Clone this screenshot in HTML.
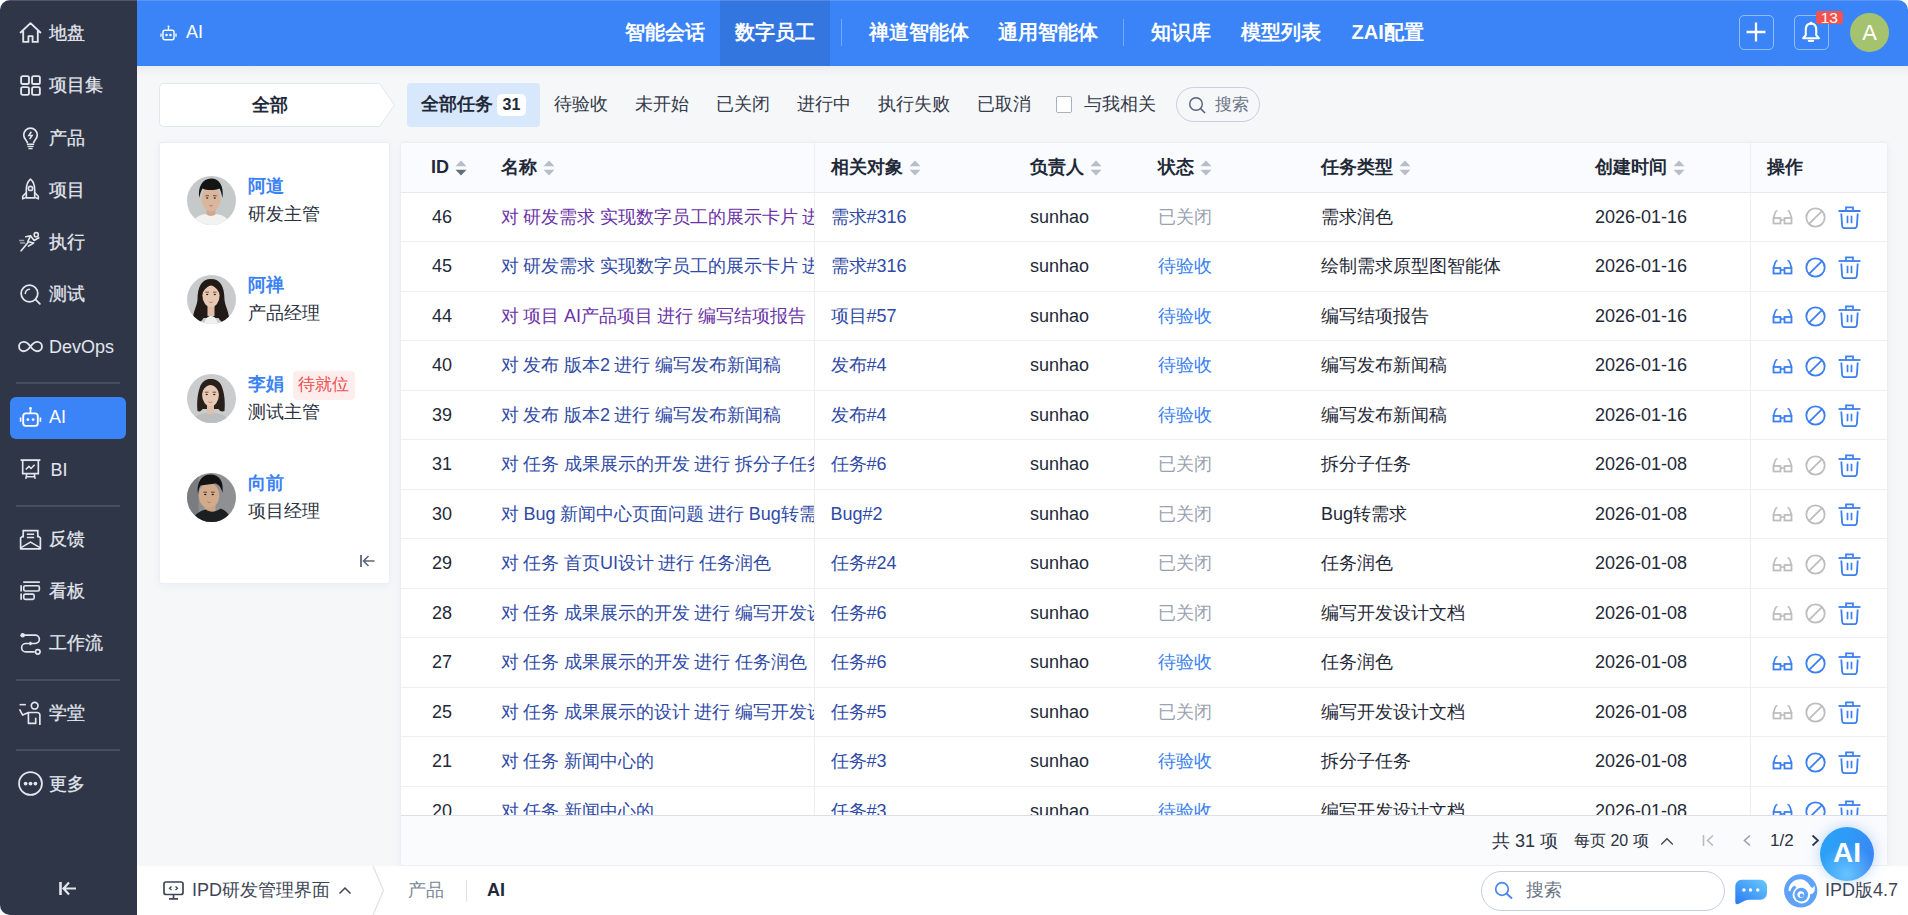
<!DOCTYPE html>
<html><head><meta charset="utf-8">
<style>
*{box-sizing:border-box;margin:0;padding:0}
html,body{width:1908px;height:915px;overflow:hidden;background:#fff}
body{font-family:"Liberation Sans",sans-serif;font-size:18px;color:#1f2937;position:relative}
.app{position:absolute;left:0;top:0;width:1908px;height:915px;border-radius:10px;overflow:hidden;background:#f6f7f9}
.topline{position:absolute;left:0;top:0;width:1908px;height:1px;background:rgba(255,255,255,.16)}
.hshadow{position:absolute;left:137px;top:66px;width:1771px;height:10px;background:linear-gradient(rgba(30,40,60,.05),rgba(30,40,60,0))}
.abs{position:absolute}
.nw{white-space:nowrap}
/* sidebar */
.side{position:absolute;left:0;top:0;width:137px;height:915px;background:#2f3648}
.si{position:absolute;left:0;width:137px;height:40px;color:#e3e6ec;font-weight:500}
.si span.cj{-webkit-text-stroke:0.25px #e3e6ec}
.si svg{position:absolute;left:18px;top:7.5px;width:25px;height:25px}
.si span{position:absolute;left:49px;top:0;line-height:40px;white-space:nowrap}
.sdiv{position:absolute;left:16px;width:104px;height:2px;background:#464e60}
.si.act{left:10px;width:116px;height:42px;background:#3a84f8;border-radius:6px}
.si.act svg{left:8px;top:8px}
.si.act span{left:39px;color:#fff;line-height:41px}
/* header */
.hdr{position:absolute;left:137px;top:0;width:1771px;height:66px;background:#3a84f8}
.nav{position:absolute;top:0;height:66px;line-height:64px;color:#fff;font-size:20px;font-weight:700;padding:0 15px;white-space:nowrap}
.navact{background:#3476e0}
.vdiv{position:absolute;top:19px;width:1px;height:27px;background:rgba(255,255,255,.3)}
.hbtn{position:absolute;top:15px;width:35px;height:35px;border:1.5px solid rgba(255,255,255,.45);border-radius:5px}
/* filter */
.tab{position:absolute;top:83px;height:43.5px;line-height:43.5px;padding:0 13.5px;white-space:nowrap;color:#333a48}
.tab.act{background:#d7e7fc;border-radius:4px;font-weight:700;color:#1f2937}
.badge{display:inline-block;vertical-align:top;margin-top:11px;margin-left:4px;height:22px;line-height:22px;padding:0 6px;background:#fff;border-radius:5px;font-size:16px;font-weight:700}
/* left panel */
.panel{position:absolute;left:159px;top:142px;width:231px;height:442px;background:#fff;border:1px solid #eceef3;border-radius:3px;box-shadow:0 2px 8px rgba(30,40,70,.05)}
.pname{position:absolute;left:88px;font-weight:700;color:#3b82f6;white-space:nowrap}
.prole{position:absolute;left:88px;color:#2b3240;white-space:nowrap}
.av{position:absolute;left:27px;width:49px;height:49px;border-radius:50%;overflow:hidden}
/* table */
.card{position:absolute;left:400px;top:142px;width:1488px;height:724px;background:#fff;border:1px solid #eceef3;border-radius:3px;overflow:hidden;box-shadow:0 2px 8px rgba(30,40,70,.05)}
.thead{position:absolute;left:0;top:0;width:1486px;height:50px;background:#f9fbfe;border-bottom:1px solid #e6e9f0}
.th{position:absolute;top:0;line-height:48px;font-weight:700;color:#1f2937;white-space:nowrap}
.sort{display:inline-block;vertical-align:top;margin-top:17px;margin-left:6px;width:12px;height:16px}
.tbody{position:absolute;left:0;top:49.5px;width:1486px;height:623px;overflow:hidden;border-bottom:1px solid #dcdfe6}
.row{position:absolute;left:0;width:1486px;height:49.5px;border-bottom:1px solid #edeff3}
.td{position:absolute;top:0;line-height:48.5px;white-space:nowrap;color:#1f2937}
.lk{color:#2f4aa6}
.nm{word-spacing:-0.55px}
.vis{color:#6a32a8}
.gray{color:#9aa1b0}
.blue{color:#3b7ff0}
.vline{position:absolute;top:0;width:1px;background:#edeff3}
.tfoot{position:absolute;left:0;top:673px;width:1486px;height:50px;background:#fafbfd}
/* bottom */
.bbar{position:absolute;left:137px;top:866px;width:1771px;height:49px;background:#fff}
</style></head>
<body>
<div class="app">

<div class="side">
<div class="si" style="top:12.5px"><svg viewBox="0 0 24 24"><path d="M2 12.5 L12 3 L22 12.5 M5 10.5 V21 H10 V15.5 H14 V21 H19 V10.5" fill="none" stroke="#e3e6ec" stroke-width="1.8" stroke-linejoin="round"/></svg><span class="cj">地盘</span></div>
<div class="si" style="top:65px"><svg viewBox="0 0 24 24"><rect x="3" y="3" width="7.5" height="7.5" rx="1.5" fill="none" stroke="#e3e6ec" stroke-width="1.8"/><rect x="13.5" y="3" width="7.5" height="7.5" rx="1.5" fill="none" stroke="#e3e6ec" stroke-width="1.8"/><rect x="3" y="13.5" width="7.5" height="7.5" rx="1.5" fill="none" stroke="#e3e6ec" stroke-width="1.8"/><rect x="13.5" y="13.5" width="7.5" height="7.5" rx="1.5" fill="none" stroke="#e3e6ec" stroke-width="1.8"/></svg><span class="cj">项目集</span></div>
<div class="si" style="top:117.5px"><svg viewBox="0 0 24 24"><path d="M9 17.5 C9 15 5.5 13.5 5.5 9.5 A6.5 6.5 0 0 1 18.5 9.5 C18.5 13.5 15 15 15 17.5" fill="none" stroke="#e3e6ec" stroke-width="1.6"/><path d="M8.5 18.5 H15.5 M9 20.5 H15 M10 22.5 H14" stroke="#e3e6ec" stroke-width="1.4"/><path d="M12.8 6.5 L10.5 10 H13.5 L11.2 13.5" fill="none" stroke="#e3e6ec" stroke-width="1.5"/></svg><span class="cj">产品</span></div>
<div class="si" style="top:169.5px"><svg viewBox="0 0 24 24"><path d="M12 2 C15.5 5 16 9 16 12 V20 H8 V12 C8 9 8.5 5 12 2 Z" fill="none" stroke="#e3e6ec" stroke-width="1.6" stroke-linejoin="round"/><circle cx="12" cy="11" r="2" fill="none" stroke="#e3e6ec" stroke-width="1.5"/><path d="M8 15 L4.5 18.5 V21 L8 19.5 M16 15 L19.5 18.5 V21 L16 19.5" fill="none" stroke="#e3e6ec" stroke-width="1.5" stroke-linejoin="round"/></svg><span class="cj">项目</span></div>
<div class="si" style="top:222px"><svg viewBox="0 0 24 24"><circle cx="17.5" cy="4.5" r="2" fill="none" stroke="#e3e6ec" stroke-width="1.5"/><path d="M7.5 6.5 L12 5.5 L9.5 11 L15 12.5 L10 15.5 M12 5.5 L15.5 10 L20 7.5 M10 11.5 L3 20" fill="none" stroke="#e3e6ec" stroke-width="1.6" stroke-linecap="round" stroke-linejoin="round"/><path d="M1 10 H6 M2 12.5 H7" stroke="#9aa0ab" stroke-width="1.5"/></svg><span class="cj">执行</span></div>
<div class="si" style="top:274px"><svg viewBox="0 0 24 24"><circle cx="11" cy="11" r="8" fill="none" stroke="#e3e6ec" stroke-width="1.7"/><path d="M17 17 L21 21" stroke="#e3e6ec" stroke-width="1.7" stroke-linecap="round"/><path d="M7 11 A4.5 4.5 0 0 1 11 7" fill="none" stroke="#e3e6ec" stroke-width="1.5" stroke-linecap="round"/></svg><span class="cj">测试</span></div>
<div class="si" style="top:326.5px"><svg viewBox="0 0 24 24"><path d="M12 12 C9.5 8.5 7.5 7.5 5.5 7.5 A4.5 4.5 0 0 0 5.5 16.5 C7.5 16.5 9.5 15.5 12 12 C14.5 8.5 16.5 7.5 18.5 7.5 A4.5 4.5 0 0 1 18.5 16.5 C16.5 16.5 14.5 15.5 12 12 Z" fill="none" stroke="#e3e6ec" stroke-width="1.8"/></svg><span>DevOps</span></div>
<div class="si act" style="top:397px"><svg viewBox="0 0 24 24"><rect x="5" y="8" width="14" height="12" rx="2.5" fill="none" stroke="#ffffff" stroke-width="1.8"/><path d="M12 8 V4" stroke="#ffffff" stroke-width="1.6"/><circle cx="12" cy="3.2" r="1.3" fill="#ffffff"/><circle cx="9.5" cy="14" r="1.3" fill="#ffffff"/><circle cx="14.5" cy="14" r="1.3" fill="#ffffff"/><path d="M2.5 12 V16 M21.5 12 V16" stroke="#ffffff" stroke-width="1.6"/></svg><span>AI</span></div>
<div class="si" style="top:449.5px"><svg viewBox="0 0 24 24"><path d="M2.5 3 H21.5" stroke="#e3e6ec" stroke-width="1.8"/><path d="M4.5 3 V16 H19.5 V3" fill="none" stroke="#e3e6ec" stroke-width="1.6"/><path d="M7.5 12 L10.5 9 L12.5 11 L16 7.5" fill="none" stroke="#e3e6ec" stroke-width="1.5"/><path d="M8.5 16 L7.5 21 M15.5 16 L16.5 21 M8 19 H16" stroke="#e3e6ec" stroke-width="1.5"/></svg><span style="left:50.5px">BI</span></div>
<div class="si" style="top:519px"><svg viewBox="0 0 24 24"><path d="M5 10 V3.5 H19 V10" fill="none" stroke="#e3e6ec" stroke-width="1.6"/><path d="M8.5 7 H15.5 M8.5 10 H15.5" stroke="#e3e6ec" stroke-width="1.5"/><path d="M5 8.5 L2.5 10.5 V21 H21.5 V10.5 L19 8.5" fill="none" stroke="#e3e6ec" stroke-width="1.6" stroke-linejoin="round"/><path d="M2.5 20 L12 14.5 L21.5 20" fill="none" stroke="#e3e6ec" stroke-width="1.5"/></svg><span class="cj">反馈</span></div>
<div class="si" style="top:571px"><svg viewBox="0 0 24 24"><path d="M5 3 H21" stroke="#e3e6ec" stroke-width="1.6"/><path d="M3 6 V12 M3 14 V20" stroke="#e3e6ec" stroke-width="1.6"/><rect x="5.5" y="6.5" width="15" height="5" rx="1.5" fill="none" stroke="#e3e6ec" stroke-width="1.6"/><rect x="5.5" y="14.5" width="10" height="5" rx="1.5" fill="none" stroke="#e3e6ec" stroke-width="1.6"/></svg><span class="cj">看板</span></div>
<div class="si" style="top:623px"><svg viewBox="0 0 24 24"><circle cx="4.5" cy="4" r="2.2" fill="#e3e6ec"/><path d="M6 4 H16.5 A4 4 0 0 1 16.5 12 H7.5 A4 4 0 0 0 7.5 20 H16" fill="none" stroke="#e3e6ec" stroke-width="1.6"/><circle cx="19" cy="20" r="2.2" fill="none" stroke="#e3e6ec" stroke-width="1.6"/><path d="M12 10 L14 12 L12 14 L10 12 Z" fill="#e3e6ec"/></svg><span class="cj">工作流</span></div>
<div class="si" style="top:693px"><svg viewBox="0 0 24 24"><path d="M1.5 3.5 H7.5" stroke="#e3e6ec" stroke-width="1.5"/><circle cx="16" cy="4.5" r="3.2" fill="none" stroke="#e3e6ec" stroke-width="1.6"/><path d="M1.5 8 L4.5 13.5 L10 11 H18.5 A2.5 2.5 0 0 1 21 13.5 V23 M10 11 V21.5 H17 V16" fill="none" stroke="#e3e6ec" stroke-width="1.6" stroke-linejoin="round"/></svg><span class="cj">学堂</span></div>
<div class="si" style="top:763.5px"><svg viewBox="0 0 24 24"><circle cx="12" cy="12" r="11" fill="none" stroke="#e3e6ec" stroke-width="1.7"/><circle cx="7.3" cy="12" r="1.8" fill="#e3e6ec"/><circle cx="12" cy="12" r="1.8" fill="#e3e6ec"/><circle cx="16.7" cy="12" r="1.8" fill="#e3e6ec"/></svg><span class="cj">更多</span></div>
<div class="sdiv" style="top:382px"></div>
<div class="sdiv" style="top:505px"></div>
<div class="sdiv" style="top:679px"></div>
<div class="sdiv" style="top:749px"></div>
<svg class="abs" style="left:58px;top:880px;width:20px;height:17px" viewBox="0 0 20 17"><path d="M2.5 2 V15" stroke="#e3e6ec" stroke-width="2.6"/><path d="M11 2.5 L5.5 8.5 L11 14.5 M5.5 8.5 H18" fill="none" stroke="#e3e6ec" stroke-width="2.2"/></svg>
</div>
<div class="hdr">
<svg class="abs" style="left:22px;top:23.5px;width:19px;height:19px" viewBox="0 0 24 24"><rect x="5" y="8" width="14" height="12" rx="2.5" fill="none" stroke="#fff" stroke-width="1.8"/><path d="M12 8 V4" stroke="#fff" stroke-width="1.6"/><circle cx="12" cy="3.2" r="1.3" fill="#fff"/><circle cx="9.5" cy="14" r="1.6" fill="#fff"/><circle cx="14.5" cy="14" r="1.6" fill="#fff"/><path d="M2.5 12 V16 M21.5 12 V16" stroke="#fff" stroke-width="1.6"/></svg>
<div class="abs nw" style="left:49px;top:0;line-height:64px;color:#fff;font-size:18px">AI</div>
<div class="nav" style="left:473px">智能会话</div>
<div class="nav navact" style="left:583px">数字员工</div>
<div class="nav" style="left:716.5px">禅道智能体</div>
<div class="nav" style="left:845.5px">通用智能体</div>
<div class="nav" style="left:998.5px">知识库</div>
<div class="nav" style="left:1089px">模型列表</div>
<div class="nav" style="left:1199.5px">ZAI配置</div>
<div class="vdiv" style="left:704px"></div>
<div class="vdiv" style="left:986px"></div>
<div class="hbtn" style="left:1602px"><svg class="abs" style="left:6px;top:6px;width:20px;height:20px" viewBox="0 0 20 20"><path d="M10 0.5 V19.5 M0.5 10 H19.5" stroke="#fff" stroke-width="2.3"/></svg></div>
<div class="hbtn" style="left:1657px"><svg class="abs" style="left:6px;top:5px;width:20px;height:23px" viewBox="0 0 19 22"><path d="M9.5 2.5 C6 2.5 4.5 5 4.5 8.5 V13.5 L2 16.5 H17 L14.5 13.5 V8.5 C14.5 5 13 2.5 9.5 2.5 Z" fill="none" stroke="#fff" stroke-width="2" stroke-linejoin="round"/><circle cx="9.5" cy="2" r="1.3" fill="#fff"/><path d="M7.5 19 H11.5" stroke="#fff" stroke-width="2.2" stroke-linecap="round"/></svg></div>
<div class="abs nw" style="left:1679px;top:10.5px;width:26.5px;height:13.5px;background:#f25350;border-radius:3px;color:#fff;font-size:15.5px;line-height:14px;text-align:center">13</div>
<div class="abs" style="left:1713px;top:13px;width:39px;height:39px;border-radius:50%;background:#a5c26f;color:#fff;font-size:22px;line-height:40px;text-align:center">A</div>
</div>
<svg class="abs" style="left:158px;top:82px;width:240px;height:47px" viewBox="0 0 240 47"><path d="M5.5 1.5 H221.5 L236.5 23 L221.5 44.5 H5.5 A4 4 0 0 1 1.5 40.5 V5.5 A4 4 0 0 1 5.5 1.5 Z" fill="#fff" stroke="#e3e6ee" stroke-width="1"/></svg>
<div class="abs nw" style="left:159px;top:83px;width:221px;line-height:44px;text-align:center;font-weight:700;color:#1f2937">全部</div>
<div class="tab act" style="left:407px">全部任务<span class="badge">31</span></div>
<div class="tab" style="left:540px">待验收</div>
<div class="tab" style="left:621px">未开始</div>
<div class="tab" style="left:702px">已关闭</div>
<div class="tab" style="left:783px">进行中</div>
<div class="tab" style="left:864px">执行失败</div>
<div class="tab" style="left:963px">已取消</div>
<div class="abs" style="left:1056px;top:96px;width:16px;height:17px;border:1.5px solid #a9b0be;border-radius:2px;background:#fff"></div>
<div class="abs nw" style="left:1083.5px;top:83px;line-height:43px;color:#333a48">与我相关</div>
<div class="abs" style="left:1176px;top:87px;width:84px;height:35px;border:1.2px solid #c9cee0;border-radius:18px"></div>
<svg class="abs" style="left:1188px;top:95.5px;width:19px;height:19px" viewBox="0 0 19 19"><circle cx="8" cy="8" r="6.3" fill="none" stroke="#566074" stroke-width="1.4"/><path d="M12.5 12.5 L17 17" stroke="#566074" stroke-width="1.6"/></svg>
<div class="abs nw" style="left:1215px;top:87px;line-height:35px;font-size:17px;color:#6d7587">搜索</div>
<div class="panel">
<div class="av" style="top:33px"><svg viewBox="2.5 3 49 49" width="49" height="49"><rect x="0" y="0" width="55" height="55" fill="#c6c9ca"/><rect x="22" y="34" width="9" height="9" fill="#cfa98f"/><path d="M5 55 C7 46 14 42 21.5 41 C24 43.5 29 43.5 31.5 41 C39 42 46 46 48 55 Z" fill="#f2f2f2"/><ellipse cx="26.5" cy="26" rx="9.6" ry="12.4" fill="#d9b69c"/><path d="M14.8 25 C13 14 18 5.5 26.5 5.5 C35 5.5 39.5 13 38 25 C37 21 36.5 18 35 15.5 C30 17.5 22 17.5 18 15.5 C16.5 18 15.5 21 14.8 25 Z" fill="#151515"/><path d="M20.9 22.7 H24.5 M28.5 22.7 H32.1" stroke="#3a2a22" stroke-width="0.9" opacity=".8"/><ellipse cx="22.7" cy="25" rx="1.2" ry="0.7" fill="#3a2a22"/><ellipse cx="30.3" cy="25" rx="1.2" ry="0.7" fill="#3a2a22"/><path d="M24.7 32.5 Q26.5 33.5 28.3 32.5" stroke="#b07a6a" stroke-width="0.9" fill="none"/></svg></div>
<div class="pname" style="top:33px;line-height:20px">阿道</div>
<div class="prole" style="top:60px;line-height:22px">研发主管</div>
<div class="av" style="top:132px"><svg viewBox="2.5 3 49 49" width="49" height="49"><rect x="0" y="0" width="55" height="55" fill="#c9cacb"/><path d="M9 50 C7 42 12 36 13 28 C13 14 17.5 7 26.5 7 C35.5 7 40 14 40 28 C41 36 46 42 44 50 C40 52 36 50 34 46 L19 46 C17 50 13 52 9 50 Z" fill="#221a17"/><path d="M19 55 C20 47 23 44 26.5 44 C30 44 33 47 34 55 Z" fill="#f0f0f0"/><rect x="23" y="33" width="7" height="11" fill="#dfbda7"/><ellipse cx="26.5" cy="23.5" rx="8.6" ry="11.5" fill="#e8c8b2"/><path d="M17.8 22 C18 14 21.5 11 26.5 11 C31.5 11 35 14 35.2 22 C33 16.5 29.5 14 26.5 13.5 C23.5 14 20 16.5 17.8 22 Z" fill="#221a17"/><path d="M20.9 20.2 H24.5 M28.5 20.2 H32.1" stroke="#3a2a22" stroke-width="0.9" opacity=".8"/><ellipse cx="22.7" cy="22.5" rx="1.2" ry="0.7" fill="#3a2a22"/><ellipse cx="30.3" cy="22.5" rx="1.2" ry="0.7" fill="#3a2a22"/><path d="M24.7 30.0 Q26.5 31.0 28.3 30.0" stroke="#b07a6a" stroke-width="0.9" fill="none"/></svg></div>
<div class="pname" style="top:132px;line-height:20px">阿禅</div>
<div class="prole" style="top:159px;line-height:22px">产品经理</div>
<div class="av" style="top:231px"><svg viewBox="2.5 3 49 49" width="49" height="49"><rect x="0" y="0" width="55" height="55" fill="#cbcccd"/><path d="M5 55 C7 46 15 41.5 26 41.5 C37 41.5 45 46 47 55 Z" fill="#bcbdbf"/><path d="M13 40 C12 30 13.5 22 15 17.5 C17 10.5 21 8 26 8 C32 8 36 10.5 38 17.5 C39.5 22 41 30 40 40 C37 41 35 40 34 38 L18 38 C17 40 15 41 13 40 Z" fill="#2a201b"/><rect x="22.5" y="33" width="7" height="10" fill="#dec0ac"/><ellipse cx="26" cy="24" rx="8.4" ry="11.3" fill="#e7c9b5"/><path d="M17.4 22.5 C17.5 15 21 12 26 12 C31 12 34.5 15 34.6 22.5 C33 17 30 14.5 26 14 C22 14.5 19 17 17.4 22.5 Z" fill="#2a201b"/><path d="M20.4 21.2 H24.0 M28.0 21.2 H31.6" stroke="#3a2a22" stroke-width="0.9" opacity=".8"/><ellipse cx="22.2" cy="23.5" rx="1.2" ry="0.7" fill="#3a2a22"/><ellipse cx="29.8" cy="23.5" rx="1.2" ry="0.7" fill="#3a2a22"/><path d="M24.2 31.0 Q26 32.0 27.8 31.0" stroke="#b07a6a" stroke-width="0.9" fill="none"/></svg></div>
<div class="pname" style="top:231px;line-height:20px">李娟</div>
<div class="prole" style="top:258px;line-height:22px">测试主管</div>
<div class="av" style="top:330px"><svg viewBox="2.5 3 49 49" width="49" height="49"><rect x="0" y="0" width="55" height="55" fill="#8e9093"/><rect x="0" y="0" width="14" height="55" fill="#6d6f72" opacity=".6"/><rect x="20" y="34" width="11" height="9" fill="#cba486"/><path d="M5 55 C8 46 15 40.5 21.5 39.5 C25 42.5 31 42.5 36 38.5 C42 40.5 46 45 48 55 Z" fill="#1c1e20"/><ellipse cx="24.5" cy="25.5" rx="10.2" ry="12.8" fill="#d2ab8d"/><path d="M13.5 24 C11.5 12 17.5 4.5 26 4.5 C34.5 4.5 39.5 11 38 23 C36.5 17.5 34.5 14.5 31 13.5 C27 14.5 20 14.5 16 15.5 C14.5 18 14 21 13.5 24 Z" fill="#131313"/><path d="M18.9 22.2 H22.5 M26.5 22.2 H30.1" stroke="#2a1d15" stroke-width="0.9" opacity=".8"/><ellipse cx="20.7" cy="24.5" rx="1.2" ry="0.7" fill="#2a1d15"/><ellipse cx="28.3" cy="24.5" rx="1.2" ry="0.7" fill="#2a1d15"/><path d="M22.7 32.0 Q24.5 33.0 26.3 32.0" stroke="#b07a6a" stroke-width="0.9" fill="none"/></svg></div>
<div class="pname" style="top:330px;line-height:20px">向前</div>
<div class="prole" style="top:357px;line-height:22px">项目经理</div>
<div class="abs nw" style="left:133px;top:228px;width:61.5px;height:29px;background:#fdeded;border-radius:4px;color:#f04d4d;line-height:27px;text-align:center;font-size:17px">待就位</div>
<svg class="abs" style="left:199px;top:410px;width:17px;height:16px" viewBox="0 0 17 16"><path d="M2 2 V14" stroke="#5d6678" stroke-width="1.8"/><path d="M9.5 3 L4.5 8 L9.5 13 M4.5 8 H15.5" fill="none" stroke="#5d6678" stroke-width="1.6"/></svg>
</div>
<div class="card">
<div class="thead">
<div class="th" style="left:30px">ID<svg class="sort" viewBox="0 0 12 16"><path d="M0.5 6.3 L6 0.5 L11.5 6.3 Z" fill="#b8bdc7"/><path d="M0.5 9.7 L6 15.5 L11.5 9.7 Z" fill="#676d7b"/></svg></div>
<div class="th" style="left:100px">名称<svg class="sort" viewBox="0 0 12 16"><path d="M0.5 6.3 L6 0.5 L11.5 6.3 Z" fill="#b8bdc7"/><path d="M0.5 9.7 L6 15.5 L11.5 9.7 Z" fill="#b8bdc7"/></svg></div>
<div class="th" style="left:429.5px">相关对象<svg class="sort" viewBox="0 0 12 16"><path d="M0.5 6.3 L6 0.5 L11.5 6.3 Z" fill="#b8bdc7"/><path d="M0.5 9.7 L6 15.5 L11.5 9.7 Z" fill="#b8bdc7"/></svg></div>
<div class="th" style="left:629px">负责人<svg class="sort" viewBox="0 0 12 16"><path d="M0.5 6.3 L6 0.5 L11.5 6.3 Z" fill="#b8bdc7"/><path d="M0.5 9.7 L6 15.5 L11.5 9.7 Z" fill="#b8bdc7"/></svg></div>
<div class="th" style="left:757px">状态<svg class="sort" viewBox="0 0 12 16"><path d="M0.5 6.3 L6 0.5 L11.5 6.3 Z" fill="#b8bdc7"/><path d="M0.5 9.7 L6 15.5 L11.5 9.7 Z" fill="#b8bdc7"/></svg></div>
<div class="th" style="left:920px">任务类型<svg class="sort" viewBox="0 0 12 16"><path d="M0.5 6.3 L6 0.5 L11.5 6.3 Z" fill="#b8bdc7"/><path d="M0.5 9.7 L6 15.5 L11.5 9.7 Z" fill="#b8bdc7"/></svg></div>
<div class="th" style="left:1194px">创建时间<svg class="sort" viewBox="0 0 12 16"><path d="M0.5 6.3 L6 0.5 L11.5 6.3 Z" fill="#b8bdc7"/><path d="M0.5 9.7 L6 15.5 L11.5 9.7 Z" fill="#b8bdc7"/></svg></div>
<div class="th" style="left:1366px">操作</div>
</div>
<div class="tbody">
<div class="row" style="top:0.0px">
<div class="td" style="left:31px">46</div>
<div class="td nm vis" style="left:100px;width:313px;overflow:hidden">对 研发需求 实现数字员工的展示卡片 进行 需求润色</div>
<div class="td lk" style="left:429.5px">需求#316</div>
<div class="td" style="left:629px">sunhao</div>
<div class="td gray" style="left:757px">已关闭</div>
<div class="td" style="left:920px">需求润色</div>
<div class="td" style="left:1194px">2026-01-16</div>
<svg class="abs" style="left:1371px;top:16.5px;width:21px;height:16px" viewBox="0 0 21 16"><path d="M5.5 1.5 C4 1.5 3.5 2.5 3 4 L1.5 9 M15.5 1.5 C17 1.5 17.5 2.5 18 4 L19.5 9" fill="none" stroke="#bdbdbd" stroke-width="1.7"/><rect x="1.5" y="9" width="7" height="5.5" fill="none" stroke="#bdbdbd" stroke-width="1.8"/><rect x="12.5" y="9" width="7" height="5.5" fill="none" stroke="#bdbdbd" stroke-width="1.8"/><path d="M8.5 11 H12.5" stroke="#bdbdbd" stroke-width="1.6"/></svg><svg class="abs" style="left:1404px;top:14.5px;width:21px;height:21px" viewBox="0 0 21 21"><circle cx="10.5" cy="10.5" r="9.2" fill="none" stroke="#bdbdbd" stroke-width="1.8"/><path d="M4.3 16.7 L16.7 4.3" stroke="#bdbdbd" stroke-width="1.8"/></svg><svg class="abs" style="left:1437px;top:13.5px;width:23px;height:23px" viewBox="0 0 23 23"><path d="M0.5 5 H22.5" stroke="#3b7ff0" stroke-width="1.8"/><path d="M8 5 V1.3 H15 V5" fill="none" stroke="#3b7ff0" stroke-width="1.7"/><path d="M3.3 7.5 L4.1 19.8 A2.6 2.6 0 0 0 6.7 22.2 H16.3 A2.6 2.6 0 0 0 18.9 19.8 L19.7 7.5" fill="none" stroke="#3b7ff0" stroke-width="1.8"/><path d="M9.5 9.7 V17.3 M13.5 9.7 V17.3" stroke="#3b7ff0" stroke-width="1.7"/></svg>
</div>
<div class="row" style="top:49.5px">
<div class="td" style="left:31px">45</div>
<div class="td nm lk" style="left:100px;width:313px;overflow:hidden">对 研发需求 实现数字员工的展示卡片 进行 绘制需求原型图</div>
<div class="td lk" style="left:429.5px">需求#316</div>
<div class="td" style="left:629px">sunhao</div>
<div class="td blue" style="left:757px">待验收</div>
<div class="td" style="left:920px">绘制需求原型图智能体</div>
<div class="td" style="left:1194px">2026-01-16</div>
<svg class="abs" style="left:1371px;top:16.5px;width:21px;height:16px" viewBox="0 0 21 16"><path d="M5.5 1.5 C4 1.5 3.5 2.5 3 4 L1.5 9 M15.5 1.5 C17 1.5 17.5 2.5 18 4 L19.5 9" fill="none" stroke="#3b7ff0" stroke-width="1.7"/><rect x="1.5" y="9" width="7" height="5.5" fill="none" stroke="#3b7ff0" stroke-width="1.8"/><rect x="12.5" y="9" width="7" height="5.5" fill="none" stroke="#3b7ff0" stroke-width="1.8"/><path d="M8.5 11 H12.5" stroke="#3b7ff0" stroke-width="1.6"/></svg><svg class="abs" style="left:1404px;top:14.5px;width:21px;height:21px" viewBox="0 0 21 21"><circle cx="10.5" cy="10.5" r="9.2" fill="none" stroke="#3b7ff0" stroke-width="1.8"/><path d="M4.3 16.7 L16.7 4.3" stroke="#3b7ff0" stroke-width="1.8"/></svg><svg class="abs" style="left:1437px;top:13.5px;width:23px;height:23px" viewBox="0 0 23 23"><path d="M0.5 5 H22.5" stroke="#3b7ff0" stroke-width="1.8"/><path d="M8 5 V1.3 H15 V5" fill="none" stroke="#3b7ff0" stroke-width="1.7"/><path d="M3.3 7.5 L4.1 19.8 A2.6 2.6 0 0 0 6.7 22.2 H16.3 A2.6 2.6 0 0 0 18.9 19.8 L19.7 7.5" fill="none" stroke="#3b7ff0" stroke-width="1.8"/><path d="M9.5 9.7 V17.3 M13.5 9.7 V17.3" stroke="#3b7ff0" stroke-width="1.7"/></svg>
</div>
<div class="row" style="top:99.0px">
<div class="td" style="left:31px">44</div>
<div class="td nm vis" style="left:100px;width:313px;overflow:hidden">对 项目 AI产品项目 进行 编写结项报告</div>
<div class="td lk" style="left:429.5px">项目#57</div>
<div class="td" style="left:629px">sunhao</div>
<div class="td blue" style="left:757px">待验收</div>
<div class="td" style="left:920px">编写结项报告</div>
<div class="td" style="left:1194px">2026-01-16</div>
<svg class="abs" style="left:1371px;top:16.5px;width:21px;height:16px" viewBox="0 0 21 16"><path d="M5.5 1.5 C4 1.5 3.5 2.5 3 4 L1.5 9 M15.5 1.5 C17 1.5 17.5 2.5 18 4 L19.5 9" fill="none" stroke="#3b7ff0" stroke-width="1.7"/><rect x="1.5" y="9" width="7" height="5.5" fill="none" stroke="#3b7ff0" stroke-width="1.8"/><rect x="12.5" y="9" width="7" height="5.5" fill="none" stroke="#3b7ff0" stroke-width="1.8"/><path d="M8.5 11 H12.5" stroke="#3b7ff0" stroke-width="1.6"/></svg><svg class="abs" style="left:1404px;top:14.5px;width:21px;height:21px" viewBox="0 0 21 21"><circle cx="10.5" cy="10.5" r="9.2" fill="none" stroke="#3b7ff0" stroke-width="1.8"/><path d="M4.3 16.7 L16.7 4.3" stroke="#3b7ff0" stroke-width="1.8"/></svg><svg class="abs" style="left:1437px;top:13.5px;width:23px;height:23px" viewBox="0 0 23 23"><path d="M0.5 5 H22.5" stroke="#3b7ff0" stroke-width="1.8"/><path d="M8 5 V1.3 H15 V5" fill="none" stroke="#3b7ff0" stroke-width="1.7"/><path d="M3.3 7.5 L4.1 19.8 A2.6 2.6 0 0 0 6.7 22.2 H16.3 A2.6 2.6 0 0 0 18.9 19.8 L19.7 7.5" fill="none" stroke="#3b7ff0" stroke-width="1.8"/><path d="M9.5 9.7 V17.3 M13.5 9.7 V17.3" stroke="#3b7ff0" stroke-width="1.7"/></svg>
</div>
<div class="row" style="top:148.5px">
<div class="td" style="left:31px">40</div>
<div class="td nm lk" style="left:100px;width:313px;overflow:hidden">对 发布 版本2 进行 编写发布新闻稿</div>
<div class="td lk" style="left:429.5px">发布#4</div>
<div class="td" style="left:629px">sunhao</div>
<div class="td blue" style="left:757px">待验收</div>
<div class="td" style="left:920px">编写发布新闻稿</div>
<div class="td" style="left:1194px">2026-01-16</div>
<svg class="abs" style="left:1371px;top:16.5px;width:21px;height:16px" viewBox="0 0 21 16"><path d="M5.5 1.5 C4 1.5 3.5 2.5 3 4 L1.5 9 M15.5 1.5 C17 1.5 17.5 2.5 18 4 L19.5 9" fill="none" stroke="#3b7ff0" stroke-width="1.7"/><rect x="1.5" y="9" width="7" height="5.5" fill="none" stroke="#3b7ff0" stroke-width="1.8"/><rect x="12.5" y="9" width="7" height="5.5" fill="none" stroke="#3b7ff0" stroke-width="1.8"/><path d="M8.5 11 H12.5" stroke="#3b7ff0" stroke-width="1.6"/></svg><svg class="abs" style="left:1404px;top:14.5px;width:21px;height:21px" viewBox="0 0 21 21"><circle cx="10.5" cy="10.5" r="9.2" fill="none" stroke="#3b7ff0" stroke-width="1.8"/><path d="M4.3 16.7 L16.7 4.3" stroke="#3b7ff0" stroke-width="1.8"/></svg><svg class="abs" style="left:1437px;top:13.5px;width:23px;height:23px" viewBox="0 0 23 23"><path d="M0.5 5 H22.5" stroke="#3b7ff0" stroke-width="1.8"/><path d="M8 5 V1.3 H15 V5" fill="none" stroke="#3b7ff0" stroke-width="1.7"/><path d="M3.3 7.5 L4.1 19.8 A2.6 2.6 0 0 0 6.7 22.2 H16.3 A2.6 2.6 0 0 0 18.9 19.8 L19.7 7.5" fill="none" stroke="#3b7ff0" stroke-width="1.8"/><path d="M9.5 9.7 V17.3 M13.5 9.7 V17.3" stroke="#3b7ff0" stroke-width="1.7"/></svg>
</div>
<div class="row" style="top:198.0px">
<div class="td" style="left:31px">39</div>
<div class="td nm lk" style="left:100px;width:313px;overflow:hidden">对 发布 版本2 进行 编写发布新闻稿</div>
<div class="td lk" style="left:429.5px">发布#4</div>
<div class="td" style="left:629px">sunhao</div>
<div class="td blue" style="left:757px">待验收</div>
<div class="td" style="left:920px">编写发布新闻稿</div>
<div class="td" style="left:1194px">2026-01-16</div>
<svg class="abs" style="left:1371px;top:16.5px;width:21px;height:16px" viewBox="0 0 21 16"><path d="M5.5 1.5 C4 1.5 3.5 2.5 3 4 L1.5 9 M15.5 1.5 C17 1.5 17.5 2.5 18 4 L19.5 9" fill="none" stroke="#3b7ff0" stroke-width="1.7"/><rect x="1.5" y="9" width="7" height="5.5" fill="none" stroke="#3b7ff0" stroke-width="1.8"/><rect x="12.5" y="9" width="7" height="5.5" fill="none" stroke="#3b7ff0" stroke-width="1.8"/><path d="M8.5 11 H12.5" stroke="#3b7ff0" stroke-width="1.6"/></svg><svg class="abs" style="left:1404px;top:14.5px;width:21px;height:21px" viewBox="0 0 21 21"><circle cx="10.5" cy="10.5" r="9.2" fill="none" stroke="#3b7ff0" stroke-width="1.8"/><path d="M4.3 16.7 L16.7 4.3" stroke="#3b7ff0" stroke-width="1.8"/></svg><svg class="abs" style="left:1437px;top:13.5px;width:23px;height:23px" viewBox="0 0 23 23"><path d="M0.5 5 H22.5" stroke="#3b7ff0" stroke-width="1.8"/><path d="M8 5 V1.3 H15 V5" fill="none" stroke="#3b7ff0" stroke-width="1.7"/><path d="M3.3 7.5 L4.1 19.8 A2.6 2.6 0 0 0 6.7 22.2 H16.3 A2.6 2.6 0 0 0 18.9 19.8 L19.7 7.5" fill="none" stroke="#3b7ff0" stroke-width="1.8"/><path d="M9.5 9.7 V17.3 M13.5 9.7 V17.3" stroke="#3b7ff0" stroke-width="1.7"/></svg>
</div>
<div class="row" style="top:247.5px">
<div class="td" style="left:31px">31</div>
<div class="td nm lk" style="left:100px;width:313px;overflow:hidden">对 任务 成果展示的开发 进行 拆分子任务</div>
<div class="td lk" style="left:429.5px">任务#6</div>
<div class="td" style="left:629px">sunhao</div>
<div class="td gray" style="left:757px">已关闭</div>
<div class="td" style="left:920px">拆分子任务</div>
<div class="td" style="left:1194px">2026-01-08</div>
<svg class="abs" style="left:1371px;top:16.5px;width:21px;height:16px" viewBox="0 0 21 16"><path d="M5.5 1.5 C4 1.5 3.5 2.5 3 4 L1.5 9 M15.5 1.5 C17 1.5 17.5 2.5 18 4 L19.5 9" fill="none" stroke="#bdbdbd" stroke-width="1.7"/><rect x="1.5" y="9" width="7" height="5.5" fill="none" stroke="#bdbdbd" stroke-width="1.8"/><rect x="12.5" y="9" width="7" height="5.5" fill="none" stroke="#bdbdbd" stroke-width="1.8"/><path d="M8.5 11 H12.5" stroke="#bdbdbd" stroke-width="1.6"/></svg><svg class="abs" style="left:1404px;top:14.5px;width:21px;height:21px" viewBox="0 0 21 21"><circle cx="10.5" cy="10.5" r="9.2" fill="none" stroke="#bdbdbd" stroke-width="1.8"/><path d="M4.3 16.7 L16.7 4.3" stroke="#bdbdbd" stroke-width="1.8"/></svg><svg class="abs" style="left:1437px;top:13.5px;width:23px;height:23px" viewBox="0 0 23 23"><path d="M0.5 5 H22.5" stroke="#3b7ff0" stroke-width="1.8"/><path d="M8 5 V1.3 H15 V5" fill="none" stroke="#3b7ff0" stroke-width="1.7"/><path d="M3.3 7.5 L4.1 19.8 A2.6 2.6 0 0 0 6.7 22.2 H16.3 A2.6 2.6 0 0 0 18.9 19.8 L19.7 7.5" fill="none" stroke="#3b7ff0" stroke-width="1.8"/><path d="M9.5 9.7 V17.3 M13.5 9.7 V17.3" stroke="#3b7ff0" stroke-width="1.7"/></svg>
</div>
<div class="row" style="top:297.0px">
<div class="td" style="left:31px">30</div>
<div class="td nm lk" style="left:100px;width:313px;overflow:hidden">对 Bug 新闻中心页面问题 进行 Bug转需求</div>
<div class="td lk" style="left:429.5px">Bug#2</div>
<div class="td" style="left:629px">sunhao</div>
<div class="td gray" style="left:757px">已关闭</div>
<div class="td" style="left:920px">Bug转需求</div>
<div class="td" style="left:1194px">2026-01-08</div>
<svg class="abs" style="left:1371px;top:16.5px;width:21px;height:16px" viewBox="0 0 21 16"><path d="M5.5 1.5 C4 1.5 3.5 2.5 3 4 L1.5 9 M15.5 1.5 C17 1.5 17.5 2.5 18 4 L19.5 9" fill="none" stroke="#bdbdbd" stroke-width="1.7"/><rect x="1.5" y="9" width="7" height="5.5" fill="none" stroke="#bdbdbd" stroke-width="1.8"/><rect x="12.5" y="9" width="7" height="5.5" fill="none" stroke="#bdbdbd" stroke-width="1.8"/><path d="M8.5 11 H12.5" stroke="#bdbdbd" stroke-width="1.6"/></svg><svg class="abs" style="left:1404px;top:14.5px;width:21px;height:21px" viewBox="0 0 21 21"><circle cx="10.5" cy="10.5" r="9.2" fill="none" stroke="#bdbdbd" stroke-width="1.8"/><path d="M4.3 16.7 L16.7 4.3" stroke="#bdbdbd" stroke-width="1.8"/></svg><svg class="abs" style="left:1437px;top:13.5px;width:23px;height:23px" viewBox="0 0 23 23"><path d="M0.5 5 H22.5" stroke="#3b7ff0" stroke-width="1.8"/><path d="M8 5 V1.3 H15 V5" fill="none" stroke="#3b7ff0" stroke-width="1.7"/><path d="M3.3 7.5 L4.1 19.8 A2.6 2.6 0 0 0 6.7 22.2 H16.3 A2.6 2.6 0 0 0 18.9 19.8 L19.7 7.5" fill="none" stroke="#3b7ff0" stroke-width="1.8"/><path d="M9.5 9.7 V17.3 M13.5 9.7 V17.3" stroke="#3b7ff0" stroke-width="1.7"/></svg>
</div>
<div class="row" style="top:346.5px">
<div class="td" style="left:31px">29</div>
<div class="td nm lk" style="left:100px;width:313px;overflow:hidden">对 任务 首页UI设计 进行 任务润色</div>
<div class="td lk" style="left:429.5px">任务#24</div>
<div class="td" style="left:629px">sunhao</div>
<div class="td gray" style="left:757px">已关闭</div>
<div class="td" style="left:920px">任务润色</div>
<div class="td" style="left:1194px">2026-01-08</div>
<svg class="abs" style="left:1371px;top:16.5px;width:21px;height:16px" viewBox="0 0 21 16"><path d="M5.5 1.5 C4 1.5 3.5 2.5 3 4 L1.5 9 M15.5 1.5 C17 1.5 17.5 2.5 18 4 L19.5 9" fill="none" stroke="#bdbdbd" stroke-width="1.7"/><rect x="1.5" y="9" width="7" height="5.5" fill="none" stroke="#bdbdbd" stroke-width="1.8"/><rect x="12.5" y="9" width="7" height="5.5" fill="none" stroke="#bdbdbd" stroke-width="1.8"/><path d="M8.5 11 H12.5" stroke="#bdbdbd" stroke-width="1.6"/></svg><svg class="abs" style="left:1404px;top:14.5px;width:21px;height:21px" viewBox="0 0 21 21"><circle cx="10.5" cy="10.5" r="9.2" fill="none" stroke="#bdbdbd" stroke-width="1.8"/><path d="M4.3 16.7 L16.7 4.3" stroke="#bdbdbd" stroke-width="1.8"/></svg><svg class="abs" style="left:1437px;top:13.5px;width:23px;height:23px" viewBox="0 0 23 23"><path d="M0.5 5 H22.5" stroke="#3b7ff0" stroke-width="1.8"/><path d="M8 5 V1.3 H15 V5" fill="none" stroke="#3b7ff0" stroke-width="1.7"/><path d="M3.3 7.5 L4.1 19.8 A2.6 2.6 0 0 0 6.7 22.2 H16.3 A2.6 2.6 0 0 0 18.9 19.8 L19.7 7.5" fill="none" stroke="#3b7ff0" stroke-width="1.8"/><path d="M9.5 9.7 V17.3 M13.5 9.7 V17.3" stroke="#3b7ff0" stroke-width="1.7"/></svg>
</div>
<div class="row" style="top:396.0px">
<div class="td" style="left:31px">28</div>
<div class="td nm lk" style="left:100px;width:313px;overflow:hidden">对 任务 成果展示的开发 进行 编写开发设计文档</div>
<div class="td lk" style="left:429.5px">任务#6</div>
<div class="td" style="left:629px">sunhao</div>
<div class="td gray" style="left:757px">已关闭</div>
<div class="td" style="left:920px">编写开发设计文档</div>
<div class="td" style="left:1194px">2026-01-08</div>
<svg class="abs" style="left:1371px;top:16.5px;width:21px;height:16px" viewBox="0 0 21 16"><path d="M5.5 1.5 C4 1.5 3.5 2.5 3 4 L1.5 9 M15.5 1.5 C17 1.5 17.5 2.5 18 4 L19.5 9" fill="none" stroke="#bdbdbd" stroke-width="1.7"/><rect x="1.5" y="9" width="7" height="5.5" fill="none" stroke="#bdbdbd" stroke-width="1.8"/><rect x="12.5" y="9" width="7" height="5.5" fill="none" stroke="#bdbdbd" stroke-width="1.8"/><path d="M8.5 11 H12.5" stroke="#bdbdbd" stroke-width="1.6"/></svg><svg class="abs" style="left:1404px;top:14.5px;width:21px;height:21px" viewBox="0 0 21 21"><circle cx="10.5" cy="10.5" r="9.2" fill="none" stroke="#bdbdbd" stroke-width="1.8"/><path d="M4.3 16.7 L16.7 4.3" stroke="#bdbdbd" stroke-width="1.8"/></svg><svg class="abs" style="left:1437px;top:13.5px;width:23px;height:23px" viewBox="0 0 23 23"><path d="M0.5 5 H22.5" stroke="#3b7ff0" stroke-width="1.8"/><path d="M8 5 V1.3 H15 V5" fill="none" stroke="#3b7ff0" stroke-width="1.7"/><path d="M3.3 7.5 L4.1 19.8 A2.6 2.6 0 0 0 6.7 22.2 H16.3 A2.6 2.6 0 0 0 18.9 19.8 L19.7 7.5" fill="none" stroke="#3b7ff0" stroke-width="1.8"/><path d="M9.5 9.7 V17.3 M13.5 9.7 V17.3" stroke="#3b7ff0" stroke-width="1.7"/></svg>
</div>
<div class="row" style="top:445.5px">
<div class="td" style="left:31px">27</div>
<div class="td nm lk" style="left:100px;width:313px;overflow:hidden">对 任务 成果展示的开发 进行 任务润色</div>
<div class="td lk" style="left:429.5px">任务#6</div>
<div class="td" style="left:629px">sunhao</div>
<div class="td blue" style="left:757px">待验收</div>
<div class="td" style="left:920px">任务润色</div>
<div class="td" style="left:1194px">2026-01-08</div>
<svg class="abs" style="left:1371px;top:16.5px;width:21px;height:16px" viewBox="0 0 21 16"><path d="M5.5 1.5 C4 1.5 3.5 2.5 3 4 L1.5 9 M15.5 1.5 C17 1.5 17.5 2.5 18 4 L19.5 9" fill="none" stroke="#3b7ff0" stroke-width="1.7"/><rect x="1.5" y="9" width="7" height="5.5" fill="none" stroke="#3b7ff0" stroke-width="1.8"/><rect x="12.5" y="9" width="7" height="5.5" fill="none" stroke="#3b7ff0" stroke-width="1.8"/><path d="M8.5 11 H12.5" stroke="#3b7ff0" stroke-width="1.6"/></svg><svg class="abs" style="left:1404px;top:14.5px;width:21px;height:21px" viewBox="0 0 21 21"><circle cx="10.5" cy="10.5" r="9.2" fill="none" stroke="#3b7ff0" stroke-width="1.8"/><path d="M4.3 16.7 L16.7 4.3" stroke="#3b7ff0" stroke-width="1.8"/></svg><svg class="abs" style="left:1437px;top:13.5px;width:23px;height:23px" viewBox="0 0 23 23"><path d="M0.5 5 H22.5" stroke="#3b7ff0" stroke-width="1.8"/><path d="M8 5 V1.3 H15 V5" fill="none" stroke="#3b7ff0" stroke-width="1.7"/><path d="M3.3 7.5 L4.1 19.8 A2.6 2.6 0 0 0 6.7 22.2 H16.3 A2.6 2.6 0 0 0 18.9 19.8 L19.7 7.5" fill="none" stroke="#3b7ff0" stroke-width="1.8"/><path d="M9.5 9.7 V17.3 M13.5 9.7 V17.3" stroke="#3b7ff0" stroke-width="1.7"/></svg>
</div>
<div class="row" style="top:495.0px">
<div class="td" style="left:31px">25</div>
<div class="td nm lk" style="left:100px;width:313px;overflow:hidden">对 任务 成果展示的设计 进行 编写开发设计文档</div>
<div class="td lk" style="left:429.5px">任务#5</div>
<div class="td" style="left:629px">sunhao</div>
<div class="td gray" style="left:757px">已关闭</div>
<div class="td" style="left:920px">编写开发设计文档</div>
<div class="td" style="left:1194px">2026-01-08</div>
<svg class="abs" style="left:1371px;top:16.5px;width:21px;height:16px" viewBox="0 0 21 16"><path d="M5.5 1.5 C4 1.5 3.5 2.5 3 4 L1.5 9 M15.5 1.5 C17 1.5 17.5 2.5 18 4 L19.5 9" fill="none" stroke="#bdbdbd" stroke-width="1.7"/><rect x="1.5" y="9" width="7" height="5.5" fill="none" stroke="#bdbdbd" stroke-width="1.8"/><rect x="12.5" y="9" width="7" height="5.5" fill="none" stroke="#bdbdbd" stroke-width="1.8"/><path d="M8.5 11 H12.5" stroke="#bdbdbd" stroke-width="1.6"/></svg><svg class="abs" style="left:1404px;top:14.5px;width:21px;height:21px" viewBox="0 0 21 21"><circle cx="10.5" cy="10.5" r="9.2" fill="none" stroke="#bdbdbd" stroke-width="1.8"/><path d="M4.3 16.7 L16.7 4.3" stroke="#bdbdbd" stroke-width="1.8"/></svg><svg class="abs" style="left:1437px;top:13.5px;width:23px;height:23px" viewBox="0 0 23 23"><path d="M0.5 5 H22.5" stroke="#3b7ff0" stroke-width="1.8"/><path d="M8 5 V1.3 H15 V5" fill="none" stroke="#3b7ff0" stroke-width="1.7"/><path d="M3.3 7.5 L4.1 19.8 A2.6 2.6 0 0 0 6.7 22.2 H16.3 A2.6 2.6 0 0 0 18.9 19.8 L19.7 7.5" fill="none" stroke="#3b7ff0" stroke-width="1.8"/><path d="M9.5 9.7 V17.3 M13.5 9.7 V17.3" stroke="#3b7ff0" stroke-width="1.7"/></svg>
</div>
<div class="row" style="top:544.5px">
<div class="td" style="left:31px">21</div>
<div class="td nm lk" style="left:100px;width:313px;overflow:hidden">对 任务 新闻中心的</div>
<div class="td lk" style="left:429.5px">任务#3</div>
<div class="td" style="left:629px">sunhao</div>
<div class="td blue" style="left:757px">待验收</div>
<div class="td" style="left:920px">拆分子任务</div>
<div class="td" style="left:1194px">2026-01-08</div>
<svg class="abs" style="left:1371px;top:16.5px;width:21px;height:16px" viewBox="0 0 21 16"><path d="M5.5 1.5 C4 1.5 3.5 2.5 3 4 L1.5 9 M15.5 1.5 C17 1.5 17.5 2.5 18 4 L19.5 9" fill="none" stroke="#3b7ff0" stroke-width="1.7"/><rect x="1.5" y="9" width="7" height="5.5" fill="none" stroke="#3b7ff0" stroke-width="1.8"/><rect x="12.5" y="9" width="7" height="5.5" fill="none" stroke="#3b7ff0" stroke-width="1.8"/><path d="M8.5 11 H12.5" stroke="#3b7ff0" stroke-width="1.6"/></svg><svg class="abs" style="left:1404px;top:14.5px;width:21px;height:21px" viewBox="0 0 21 21"><circle cx="10.5" cy="10.5" r="9.2" fill="none" stroke="#3b7ff0" stroke-width="1.8"/><path d="M4.3 16.7 L16.7 4.3" stroke="#3b7ff0" stroke-width="1.8"/></svg><svg class="abs" style="left:1437px;top:13.5px;width:23px;height:23px" viewBox="0 0 23 23"><path d="M0.5 5 H22.5" stroke="#3b7ff0" stroke-width="1.8"/><path d="M8 5 V1.3 H15 V5" fill="none" stroke="#3b7ff0" stroke-width="1.7"/><path d="M3.3 7.5 L4.1 19.8 A2.6 2.6 0 0 0 6.7 22.2 H16.3 A2.6 2.6 0 0 0 18.9 19.8 L19.7 7.5" fill="none" stroke="#3b7ff0" stroke-width="1.8"/><path d="M9.5 9.7 V17.3 M13.5 9.7 V17.3" stroke="#3b7ff0" stroke-width="1.7"/></svg>
</div>
<div class="row" style="top:594.0px">
<div class="td" style="left:31px">20</div>
<div class="td nm lk" style="left:100px;width:313px;overflow:hidden">对 任务 新闻中心的</div>
<div class="td lk" style="left:429.5px">任务#3</div>
<div class="td" style="left:629px">sunhao</div>
<div class="td blue" style="left:757px">待验收</div>
<div class="td" style="left:920px">编写开发设计文档</div>
<div class="td" style="left:1194px">2026-01-08</div>
<svg class="abs" style="left:1371px;top:16.5px;width:21px;height:16px" viewBox="0 0 21 16"><path d="M5.5 1.5 C4 1.5 3.5 2.5 3 4 L1.5 9 M15.5 1.5 C17 1.5 17.5 2.5 18 4 L19.5 9" fill="none" stroke="#3b7ff0" stroke-width="1.7"/><rect x="1.5" y="9" width="7" height="5.5" fill="none" stroke="#3b7ff0" stroke-width="1.8"/><rect x="12.5" y="9" width="7" height="5.5" fill="none" stroke="#3b7ff0" stroke-width="1.8"/><path d="M8.5 11 H12.5" stroke="#3b7ff0" stroke-width="1.6"/></svg><svg class="abs" style="left:1404px;top:14.5px;width:21px;height:21px" viewBox="0 0 21 21"><circle cx="10.5" cy="10.5" r="9.2" fill="none" stroke="#3b7ff0" stroke-width="1.8"/><path d="M4.3 16.7 L16.7 4.3" stroke="#3b7ff0" stroke-width="1.8"/></svg><svg class="abs" style="left:1437px;top:13.5px;width:23px;height:23px" viewBox="0 0 23 23"><path d="M0.5 5 H22.5" stroke="#3b7ff0" stroke-width="1.8"/><path d="M8 5 V1.3 H15 V5" fill="none" stroke="#3b7ff0" stroke-width="1.7"/><path d="M3.3 7.5 L4.1 19.8 A2.6 2.6 0 0 0 6.7 22.2 H16.3 A2.6 2.6 0 0 0 18.9 19.8 L19.7 7.5" fill="none" stroke="#3b7ff0" stroke-width="1.8"/><path d="M9.5 9.7 V17.3 M13.5 9.7 V17.3" stroke="#3b7ff0" stroke-width="1.7"/></svg>
</div>
<div class="vline" style="left:413px;height:623px"></div>
<div class="vline" style="left:1349px;height:623px"></div>
</div>
<div class="vline" style="left:413px;top:0;height:50px"></div>
<div class="vline" style="left:1349px;top:0;height:50px"></div>
<div class="tfoot">
<div class="abs nw" style="left:1091px;top:0.5px;line-height:48px;color:#2b3240">共 31 项</div>
<div class="abs nw" style="left:1173px;top:1px;line-height:48px;color:#2b3240;font-size:16px">每页 20 项</div>
<svg class="abs" style="left:1259px;top:20.5px;width:14px;height:9px" viewBox="0 0 14 9"><path d="M1.2 7.5 L7 1.7 L12.8 7.5" fill="none" stroke="#3d4556" stroke-width="1.3"/></svg>
<svg class="abs" style="left:1301px;top:18px;width:13px;height:13px" viewBox="0 0 13 13"><path d="M1.5 1 V12" stroke="#b6bbc6" stroke-width="1.6"/><path d="M11 1.5 L5.5 6.5 L11 11.5" fill="none" stroke="#b6bbc6" stroke-width="1.6"/></svg>
<svg class="abs" style="left:1342px;top:18px;width:9px;height:13px" viewBox="0 0 9 13"><path d="M7 1.5 L1.5 6.5 L7 11.5" fill="none" stroke="#9aa0ad" stroke-width="1.6"/></svg>
<div class="abs nw" style="left:1369px;top:1px;line-height:48px;color:#2b3240;font-size:17px">1/2</div>
<svg class="abs" style="left:1410px;top:18px;width:9px;height:13px" viewBox="0 0 9 13"><path d="M1.5 1.5 L7 6.5 L1.5 11.5" fill="none" stroke="#2b3240" stroke-width="1.7"/></svg>
</div>
</div>
<div class="bbar">
<svg class="abs" style="left:26px;top:15px;width:21px;height:19px" viewBox="0 0 21 19"><rect x="1" y="1" width="19" height="12.5" rx="2" fill="none" stroke="#3d4556" stroke-width="1.7"/><path d="M10.5 13.5 V17.5 M6 17.8 H15" stroke="#3d4556" stroke-width="1.7"/><path d="M8.5 5.5 L6.5 7.3 L8.5 9 M12.5 5.5 L14.5 7.3 L12.5 9" fill="none" stroke="#3d4556" stroke-width="1.3"/></svg>
<div class="abs nw" style="left:55px;top:0;line-height:48px;color:#3d4556">IPD研发管理界面</div>
<svg class="abs" style="left:201px;top:20px;width:14px;height:9px" viewBox="0 0 14 9"><path d="M1.5 7.5 L7 2 L12.5 7.5" fill="none" stroke="#3d4556" stroke-width="1.5"/></svg>
<svg class="abs" style="left:233px;top:0;width:18px;height:49px" viewBox="0 0 18 49"><path d="M3 0 L13.5 24.5 L3 49" fill="none" stroke="#dfe2e8" stroke-width="1.3"/></svg>
<div class="abs nw" style="left:271px;top:0;line-height:48px;color:#7d8596">产品</div>
<div class="abs" style="left:329px;top:14px;width:1px;height:22px;background:#dfe2e8"></div>
<div class="abs nw" style="left:350px;top:0;line-height:48px;color:#1f2937;font-weight:700">AI</div>
<div class="abs" style="left:1344px;top:5px;width:244px;height:40px;border:1.5px solid #c8cde2;border-radius:20px"></div>
<svg class="abs" style="left:1357px;top:15px;width:20px;height:19px" viewBox="0 0 20 19"><circle cx="8" cy="8" r="6.3" fill="none" stroke="#4a86f0" stroke-width="1.7"/><path d="M12.5 12.5 L18 17.5" stroke="#4a86f0" stroke-width="1.9"/></svg>
<div class="abs nw" style="left:1389px;top:0;line-height:48px;color:#6b7385">搜索</div>
<svg class="abs" style="left:1598px;top:12.5px;width:33px;height:26px" viewBox="0 0 33 26"><defs><linearGradient id="cg" x1="0" y1="1" x2="1" y2="0"><stop offset="0" stop-color="#2a78f6"/><stop offset="1" stop-color="#68cafa"/></linearGradient></defs><path d="M6.5 0.8 H25.5 A6.5 6.5 0 0 1 32 7.3 V14.2 A6.5 6.5 0 0 1 25.5 20.7 H15 C11 20.7 7.5 22.8 3.2 25 C1.6 25.6 0.3 24.6 0.3 23 V7.3 A6.5 6.5 0 0 1 6.5 0.8 Z" fill="url(#cg)"/><circle cx="8.9" cy="11" r="1.7" fill="#fff"/><circle cx="15.5" cy="11" r="1.7" fill="#fff"/><circle cx="22.8" cy="11" r="1.7" fill="#fff"/></svg>
<svg class="abs" style="left:1647px;top:8px;width:34px;height:34px" viewBox="0 0 34 34"><circle cx="16.7" cy="16.9" r="16.6" fill="#5ea3f7"/><path d="M4.5 17 C4.5 9.5 10.5 5 16.5 5.2 C21.5 5.4 24.5 9 26.5 12.5 C27.8 14.5 30 14.2 30.2 11 C31.8 15.5 30.5 19.5 27 20 C24 20.4 21.5 17 19 15 C15.5 12.5 10 13.5 8 17.5 Z" fill="#fff"/><circle cx="17.3" cy="20.6" r="9" fill="#fff"/><path d="M10.5 11.5 C6.5 13.5 5.2 19 7.2 23.5 C8.5 21.5 8.6 17 12.5 13.5 Z" fill="#5ea3f7"/><path d="M4.3 19 C5.5 25 11 30 17.5 29.5 C11 28 8 24 8.2 20 Z" fill="#5ea3f7"/><circle cx="17.3" cy="20.6" r="6.8" fill="#5ea3f7"/><circle cx="16.8" cy="20.6" r="3.4" fill="#fff"/><circle cx="17.7" cy="21.6" r="2" fill="#5ea3f7"/></svg>
<div class="abs nw" style="left:1688px;top:0;line-height:48px;color:#3d4556;font-size:18px">IPD版4.7</div>
</div>
<div class="abs" style="left:1820px;top:826.5px;width:54px;height:54px;border-radius:50%;background:radial-gradient(circle at 50% 88%,rgba(110,200,255,.9) 0%,rgba(110,200,255,0) 55%),linear-gradient(110deg,#29a3f6 0%,#2f9af6 45%,#3c7ff4 100%);box-shadow:0 0 14px rgba(60,140,245,.35);color:#fff;font-weight:700;font-size:28px;line-height:52px;text-align:center">AI</div>
<div class="hshadow"></div><div class="topline"></div>
</div>
</body></html>
